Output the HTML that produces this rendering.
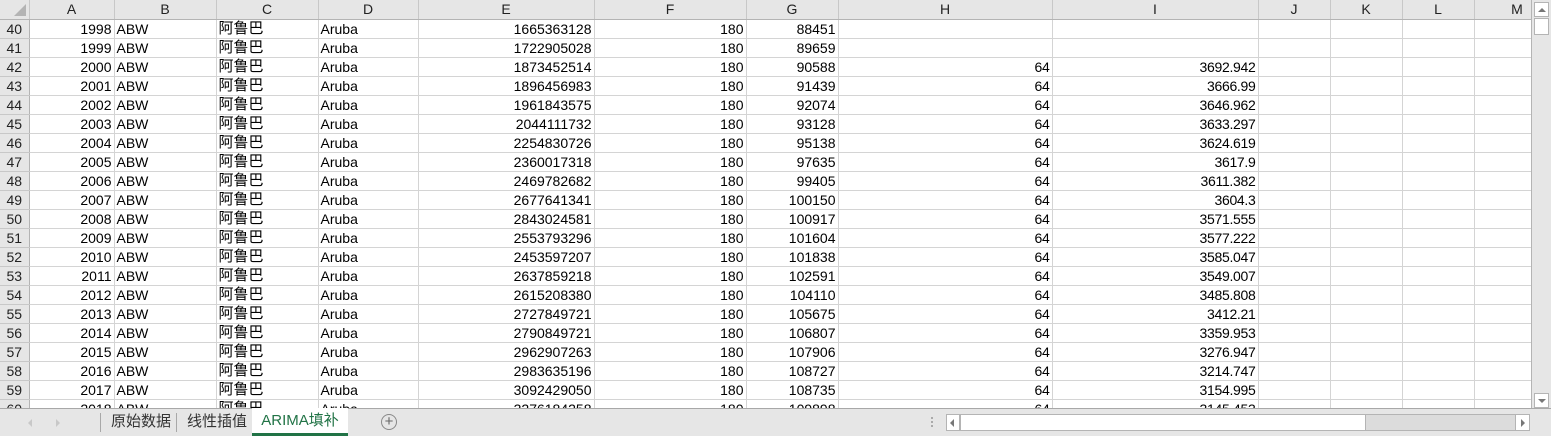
<!DOCTYPE html>
<html><head><meta charset="utf-8"><style>
*{margin:0;padding:0;box-sizing:border-box}
body{width:1551px;height:436px;overflow:hidden;background:#fff;font-family:"Liberation Sans","Noto Sans CJK SC",sans-serif;font-size:14px;color:#000;position:relative}
table{position:absolute;left:0;top:0;border-collapse:collapse;table-layout:fixed;width:1560px}
td,th{height:19px;border-right:1px solid #d4d4d4;border-bottom:1px solid #d4d4d4;white-space:nowrap;overflow:hidden;padding:0 2px;line-height:18px}
th{background:#e6e6e6;font-weight:normal;color:#222;border-right:1px solid #c8c8c8;border-bottom:1px solid #b4b4b4;height:19px;text-align:center;font-size:14px}
td.n{background:#e6e6e6;text-align:center;border-right:1px solid #b4b4b4;border-bottom:1px solid #c8c8c8;color:#222;padding:0}
td.c{font-size:15px}
.r{text-align:right}
.nar{letter-spacing:-0.3px}
#vs{position:absolute;left:1531px;top:0;width:20px;height:408px;background:#e6e6e6;border-left:1px solid #b4b4b4}
.btn{position:absolute;background:#fff;border:1px solid #b4b4b4}
#tabs{position:absolute;left:0;top:408px;width:1551px;height:28px;background:#e6e6e6;border-top:1px solid #a8a8a8}
.sep{position:absolute;top:4px;width:1px;height:19px;background:#a8a8a8}
.tab{position:absolute;top:0;height:27px;line-height:25px;font-size:15px;color:#333;font-family:"Liberation Sans","Noto Sans CJK SC",sans-serif}
</style></head><body>
<table>
<colgroup><col style="width:29px"><col style="width:85px"><col style="width:102px"><col style="width:102px"><col style="width:100px"><col style="width:176px"><col style="width:152px"><col style="width:92px"><col style="width:214px"><col style="width:206px"><col style="width:72px"><col style="width:72px"><col style="width:72px"><col style="width:86px"></colgroup>
<tr><th style="position:relative"><span style="position:absolute;right:3px;bottom:3px;width:0;height:0;border-left:12px solid transparent;border-bottom:12px solid #b4b4b4"></span></th><th>A</th><th>B</th><th>C</th><th>D</th><th>E</th><th>F</th><th>G</th><th>H</th><th>I</th><th>J</th><th>K</th><th>L</th><th>M</th></tr>
<tr><td class="n">40</td><td class="r">1998</td><td>ABW</td><td class="c">阿鲁巴</td><td>Aruba</td><td class="r">1665363128</td><td class="r">180</td><td class="r">88451</td><td></td><td></td><td></td><td></td><td></td><td></td></tr>
<tr><td class="n">41</td><td class="r">1999</td><td>ABW</td><td class="c">阿鲁巴</td><td>Aruba</td><td class="r">1722905028</td><td class="r">180</td><td class="r">89659</td><td></td><td></td><td></td><td></td><td></td><td></td></tr>
<tr><td class="n">42</td><td class="r">2000</td><td>ABW</td><td class="c">阿鲁巴</td><td>Aruba</td><td class="r">1873452514</td><td class="r">180</td><td class="r">90588</td><td class="r nar">64</td><td class="r nar">3692.942</td><td></td><td></td><td></td><td></td></tr>
<tr><td class="n">43</td><td class="r">2001</td><td>ABW</td><td class="c">阿鲁巴</td><td>Aruba</td><td class="r">1896456983</td><td class="r">180</td><td class="r">91439</td><td class="r nar">64</td><td class="r nar">3666.99</td><td></td><td></td><td></td><td></td></tr>
<tr><td class="n">44</td><td class="r">2002</td><td>ABW</td><td class="c">阿鲁巴</td><td>Aruba</td><td class="r">1961843575</td><td class="r">180</td><td class="r">92074</td><td class="r nar">64</td><td class="r nar">3646.962</td><td></td><td></td><td></td><td></td></tr>
<tr><td class="n">45</td><td class="r">2003</td><td>ABW</td><td class="c">阿鲁巴</td><td>Aruba</td><td class="r">2044111732</td><td class="r">180</td><td class="r">93128</td><td class="r nar">64</td><td class="r nar">3633.297</td><td></td><td></td><td></td><td></td></tr>
<tr><td class="n">46</td><td class="r">2004</td><td>ABW</td><td class="c">阿鲁巴</td><td>Aruba</td><td class="r">2254830726</td><td class="r">180</td><td class="r">95138</td><td class="r nar">64</td><td class="r nar">3624.619</td><td></td><td></td><td></td><td></td></tr>
<tr><td class="n">47</td><td class="r">2005</td><td>ABW</td><td class="c">阿鲁巴</td><td>Aruba</td><td class="r">2360017318</td><td class="r">180</td><td class="r">97635</td><td class="r nar">64</td><td class="r nar">3617.9</td><td></td><td></td><td></td><td></td></tr>
<tr><td class="n">48</td><td class="r">2006</td><td>ABW</td><td class="c">阿鲁巴</td><td>Aruba</td><td class="r">2469782682</td><td class="r">180</td><td class="r">99405</td><td class="r nar">64</td><td class="r nar">3611.382</td><td></td><td></td><td></td><td></td></tr>
<tr><td class="n">49</td><td class="r">2007</td><td>ABW</td><td class="c">阿鲁巴</td><td>Aruba</td><td class="r">2677641341</td><td class="r">180</td><td class="r">100150</td><td class="r nar">64</td><td class="r nar">3604.3</td><td></td><td></td><td></td><td></td></tr>
<tr><td class="n">50</td><td class="r">2008</td><td>ABW</td><td class="c">阿鲁巴</td><td>Aruba</td><td class="r">2843024581</td><td class="r">180</td><td class="r">100917</td><td class="r nar">64</td><td class="r nar">3571.555</td><td></td><td></td><td></td><td></td></tr>
<tr><td class="n">51</td><td class="r">2009</td><td>ABW</td><td class="c">阿鲁巴</td><td>Aruba</td><td class="r">2553793296</td><td class="r">180</td><td class="r">101604</td><td class="r nar">64</td><td class="r nar">3577.222</td><td></td><td></td><td></td><td></td></tr>
<tr><td class="n">52</td><td class="r">2010</td><td>ABW</td><td class="c">阿鲁巴</td><td>Aruba</td><td class="r">2453597207</td><td class="r">180</td><td class="r">101838</td><td class="r nar">64</td><td class="r nar">3585.047</td><td></td><td></td><td></td><td></td></tr>
<tr><td class="n">53</td><td class="r">2011</td><td>ABW</td><td class="c">阿鲁巴</td><td>Aruba</td><td class="r">2637859218</td><td class="r">180</td><td class="r">102591</td><td class="r nar">64</td><td class="r nar">3549.007</td><td></td><td></td><td></td><td></td></tr>
<tr><td class="n">54</td><td class="r">2012</td><td>ABW</td><td class="c">阿鲁巴</td><td>Aruba</td><td class="r">2615208380</td><td class="r">180</td><td class="r">104110</td><td class="r nar">64</td><td class="r nar">3485.808</td><td></td><td></td><td></td><td></td></tr>
<tr><td class="n">55</td><td class="r">2013</td><td>ABW</td><td class="c">阿鲁巴</td><td>Aruba</td><td class="r">2727849721</td><td class="r">180</td><td class="r">105675</td><td class="r nar">64</td><td class="r nar">3412.21</td><td></td><td></td><td></td><td></td></tr>
<tr><td class="n">56</td><td class="r">2014</td><td>ABW</td><td class="c">阿鲁巴</td><td>Aruba</td><td class="r">2790849721</td><td class="r">180</td><td class="r">106807</td><td class="r nar">64</td><td class="r nar">3359.953</td><td></td><td></td><td></td><td></td></tr>
<tr><td class="n">57</td><td class="r">2015</td><td>ABW</td><td class="c">阿鲁巴</td><td>Aruba</td><td class="r">2962907263</td><td class="r">180</td><td class="r">107906</td><td class="r nar">64</td><td class="r nar">3276.947</td><td></td><td></td><td></td><td></td></tr>
<tr><td class="n">58</td><td class="r">2016</td><td>ABW</td><td class="c">阿鲁巴</td><td>Aruba</td><td class="r">2983635196</td><td class="r">180</td><td class="r">108727</td><td class="r nar">64</td><td class="r nar">3214.747</td><td></td><td></td><td></td><td></td></tr>
<tr><td class="n">59</td><td class="r">2017</td><td>ABW</td><td class="c">阿鲁巴</td><td>Aruba</td><td class="r">3092429050</td><td class="r">180</td><td class="r">108735</td><td class="r nar">64</td><td class="r nar">3154.995</td><td></td><td></td><td></td><td></td></tr>
<tr><td class="n">60</td><td class="r">2018</td><td>ABW</td><td class="c">阿鲁巴</td><td>Aruba</td><td class="r">3276184258</td><td class="r">180</td><td class="r">109898</td><td class="r nar">64</td><td class="r nar">3145.453</td><td></td><td></td><td></td><td></td></tr>
</table>
<div id="vs">
 <div class="btn" style="left:2px;top:2px;width:15px;height:15px"><div style="position:absolute;left:3px;top:5px;border-left:4px solid transparent;border-right:4px solid transparent;border-bottom:4px solid #777"></div></div>
 <div class="btn" style="left:2px;top:18px;width:15px;height:17px"></div>
 <div class="btn" style="left:2px;top:393px;width:15px;height:15px"><div style="position:absolute;left:3px;top:5px;border-left:4px solid transparent;border-right:4px solid transparent;border-top:4px solid #777"></div></div>
</div>
<div id="tabs">
 <div style="position:absolute;left:28px;top:10px;border-top:4px solid transparent;border-bottom:4px solid transparent;border-right:4px solid #c8c8c8"></div>
 <div style="position:absolute;left:56px;top:10px;border-top:4px solid transparent;border-bottom:4px solid transparent;border-left:4px solid #c8c8c8"></div>
 <div class="sep" style="left:100px"></div>
 <div class="tab" style="left:111px">原始数据</div>
 <div class="sep" style="left:176px"></div>
 <div class="tab" style="left:187px">线性插值</div>
 <div class="tab" style="left:252px;width:96px;background:#fff;color:#217346;text-align:center;border-bottom:3px solid #217346;top:-1px;height:28px">ARIMA填补</div>
 <div style="position:absolute;left:381px;top:5px;width:16px;height:16px;border:1px solid #888;border-radius:50%;text-align:center;line-height:13px;font-size:15px;color:#666">+</div>
 <div style="position:absolute;left:931px;top:8px;width:2px;height:2px;background:#aaa;box-shadow:0 4px 0 #aaa,0 8px 0 #aaa"></div>
 <div style="position:absolute;left:946px;top:5px;width:584px;height:17px;background:#dcdcdc;border:1px solid #b4b4b4"></div>
 <div class="btn" style="left:946px;top:5px;width:14px;height:17px"><div style="position:absolute;left:3px;top:4px;border-top:4px solid transparent;border-bottom:4px solid transparent;border-right:4px solid #777"></div></div>
 <div class="btn" style="left:960px;top:5px;width:406px;height:17px"></div>
 <div class="btn" style="left:1515px;top:5px;width:15px;height:17px"><div style="position:absolute;left:5px;top:4px;border-top:4px solid transparent;border-bottom:4px solid transparent;border-left:4px solid #777"></div></div>
</div>
</body></html>
